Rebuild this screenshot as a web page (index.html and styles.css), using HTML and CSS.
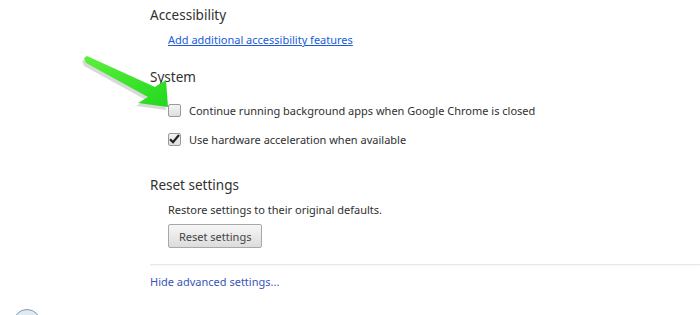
FILE: index.html
```html
<!DOCTYPE html>
<html lang="en">
<head>
  <meta charset="UTF-8" />
  <title>Settings</title>
  <link rel="stylesheet" href="styles.css">
</head>
<body>

  <div class="page">
    <section class="group">
      <h3>Accessibility</h3>
      <div class="group-body">
        <a class="link" href="#">Add additional accessibility features</a>
      </div>
    </section>

    <section class="group system">
      <h3>System</h3>
      <div class="group-body">
        <label class="check-row">
          <span class="box"></span>
          Continue running background apps when Google Chrome is closed
        </label>
        <label class="check-row second">
          <span class="box checked">
            <svg width="11" height="10" viewBox="0 0 11 10"><path d="M1 5.2 L4 8.2 L10 1" fill="none" stroke="#222" stroke-width="2.2"/></svg>
          </span>
          Use hardware acceleration when available
        </label>
      </div>
    </section>

    <section class="group reset">
      <h3>Reset settings</h3>
      <div class="group-body">
        <div class="text">Restore settings to their original defaults.</div>
        <button class="btn">Reset settings</button>
      </div>
    </section>

    <div class="separator"></div>
    <a class="hide-link" href="#">Hide advanced settings...</a>
  </div>

  <!-- pointer drawn over the screenshot -->
  <svg class="arrow" width="200" height="130" viewBox="0 0 200 130">
    <defs>
      <linearGradient id="g" x1="0" y1="0" x2="1" y2="1">
        <stop offset="0" stop-color="#5cf03c"/>
        <stop offset="1" stop-color="#22d81e"/>
      </linearGradient>
    </defs>
    <polygon points="84,58 87,56 155,87 166,80 168,107 138,103 148,97 86,63" fill="#000" opacity="0.15" transform="translate(-2,3)"/>
    <polygon points="84,58 87,56 155,87 166,80 168,107 138,103 148,97 86,63" fill="url(#g)"/>
  </svg>

  <div class="avatar-clip"><div class="avatar"></div></div>

</body>
</html>
```

FILE: styles.css
```css
html, body {
  overflow: hidden;
}
body {
  margin: 0;
  background: #fff;
  font-family: "Noto Sans", "Open Sans", sans-serif;
  font-size: 11px;
  color: #303030;
}
.page {
  padding: 5px 0 0 150px;
}
h3 {
  margin: 0;
  font-size: 13.5px;
  font-weight: normal;
  line-height: 20px;
  color: #303030;
}
.group-body {
  padding-left: 18px;
}
.link {
  display: inline-block;
  margin-top: 5px;
  line-height: 20px;
  color: #1a5bd6;
  text-decoration: underline;
}
.system {
  margin-top: 17px;
}
.check-row {
  display: flex;
  align-items: center;
  height: 20px;
  margin-top: 13px;
}
.check-row.second {
  margin-top: 9px;
}
.box {
  width: 11px;
  height: 11px;
  border: 1px solid #9a9a9a;
  border-radius: 2px;
  background: linear-gradient(#f4f4f4, #dedede);
  margin-right: 8px;
  display: flex;
  align-items: center;
  justify-content: center;
}
.reset {
  margin-top: 26px;
}
.text {
  margin-top: 5px;
  line-height: 20px;
}
.btn {
  margin-top: 4px;
  height: 24px;
  padding: 0 10px;
  font-family: inherit;
  font-size: 11px;
  color: #444;
  border: 1px solid #a8a8a8;
  border-radius: 2px;
  background: linear-gradient(#f6f6f6, #dcdcdc);
}
.separator {
  margin-top: 16px;
  height: 1px;
  background: #e8e8e8;
  box-shadow: 0 1px 2px #f0f0f0;
}
.hide-link {
  display: inline-block;
  margin-top: 7px;
  line-height: 20px;
  color: #3a55b8;
  text-decoration: none;
}
.arrow {
  position: absolute;
  left: 0;
  top: 0;
}
.avatar-clip {
  position: absolute;
  left: 13px;
  top: 309px;
  width: 30px;
  height: 6px;
  overflow: hidden;
}
.avatar {
  width: 26px;
  height: 26px;
  border-radius: 50%;
  border: 1px solid #7d98b0;
  background: #dfeaf3;
}
```
